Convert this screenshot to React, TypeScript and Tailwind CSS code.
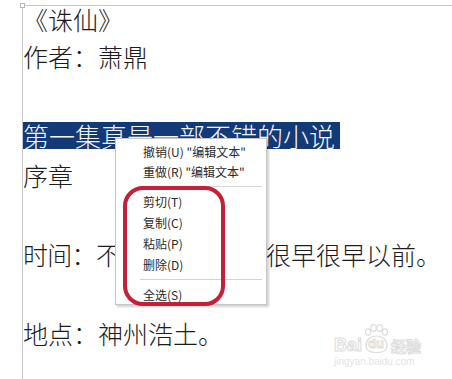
const body = "[font-family:'Noto_Sans_CJK_SC',sans-serif]";

const menuTop = [
  '撤销(U) "编辑文本"',
  '重做(R) "编辑文本"',
];
const menuMid = ["剪切(T)", "复制(C)", "粘贴(P)", "删除(D)"];

const Separator = () => <div className="ml-[24px] mr-[4px] my-[4px] h-px bg-[#d4d4d4]" />;

const Paw = () => (
  <svg width="29" height="30" viewBox="0 0 29 30" fill="none" stroke="#dcdcdc" strokeWidth="1.2">
    <ellipse cx="6" cy="8" rx="2.6" ry="3.2" />
    <ellipse cx="11.5" cy="4" rx="2.8" ry="3.4" />
    <ellipse cx="17.5" cy="4" rx="2.8" ry="3.4" />
    <ellipse cx="23" cy="8" rx="2.6" ry="3.2" />
    <path d="M4 22c0-6 4.5-10 10.5-10s10.5 4 10.5 10c0 4-3.5 6.5-10.5 6.5S4 26 4 22z" />
  </svg>
);

export default function App() {
  return (
    <div className={`relative w-[452px] h-[379px] overflow-hidden bg-white ${body}`}>
      <div className="ml-[22px] mt-[5px] h-[374px] border-t border-l border-[#c8c8c8] text-[25px] font-light text-[#1c1c1c]">
        <div className="h-[27px] leading-[27px] mb-[4px]">《诛仙》</div>
        <div className="leading-[39.5px]">作者：萧鼎</div>
        <div className="h-[39.5px]" />
        <div className="h-[39.5px] flex items-center">
          <span className="inline-block h-[27px] leading-[27px] text-[26px] pr-[5px] bg-[#123a78] text-[#f4f4f4]">
            第一集真是一部不错的小说
          </span>
        </div>
        <div className="leading-[39.5px]">序章</div>
        <div className="h-[39.5px]" />
        <div className="leading-[39.5px] whitespace-nowrap">
          <span className="tracking-[-0.7px]">时间：不知多少年前，</span>
          很早很早以前。
        </div>
        <div className="h-[39.5px]" />
        <div className="leading-[39.5px]">地点：神州浩土。</div>
      </div>

      {/* corner handle */}
      <div className="absolute left-[20px] top-[3px] w-[5px] h-[5px] border border-[#b5b5b5] bg-white" />

      {/* context menu */}
      <div className="absolute left-[115px] top-[138px] w-[152px] h-[167px] bg-white border border-[#c6c6c6] shadow-[2px_2px_2px_rgba(0,0,0,0.18)] pt-[3px] text-[12px] text-[#2a2a2a]">
        {menuTop.map((t) => (
          <div key={t} className="h-[20px] leading-[20px] pl-[27px] whitespace-nowrap">
            {t}
          </div>
        ))}
        <Separator />
        {menuMid.map((t) => (
          <div key={t} className="h-[21px] leading-[21px] pl-[27px]">
            {t}
          </div>
        ))}
        <Separator />
        <div className="h-[21px] leading-[21px] pl-[27px]">全选(S)</div>
      </div>

      {/* red highlight ring */}
      <div className="absolute left-[123px] top-[186px] w-[102px] h-[120px] border-[4px] border-[#c62038] rounded-[20px]" />

      {/* watermark */}
      <div className="absolute left-[334px] top-[324px] flex flex-col items-start">
        <div className="flex items-end h-[30px]">
          <span className="text-[18px] font-bold leading-[18px] text-white [-webkit-text-stroke:1px_#dcdcdc] [font-family:'Liberation_Sans',sans-serif]">
            Bai
          </span>
          <span className="relative w-[29px] h-[30px]">
            <Paw />
            <span className="absolute left-[6px] top-[13px] text-[13px] font-bold leading-[13px] text-white [-webkit-text-stroke:1px_#dcdcdc] [font-family:'Liberation_Sans',sans-serif]">
              du
            </span>
          </span>
          <span className="text-[15px] font-bold leading-[17px] text-white [-webkit-text-stroke:1px_#dcdcdc]">经验</span>
        </div>
        <div className="mt-[3px] text-[10px] leading-[10px] text-[#e4e4e4] [font-family:'Liberation_Sans',sans-serif]">
          jingyan.baidu.com
        </div>
      </div>
    </div>
  );
}
